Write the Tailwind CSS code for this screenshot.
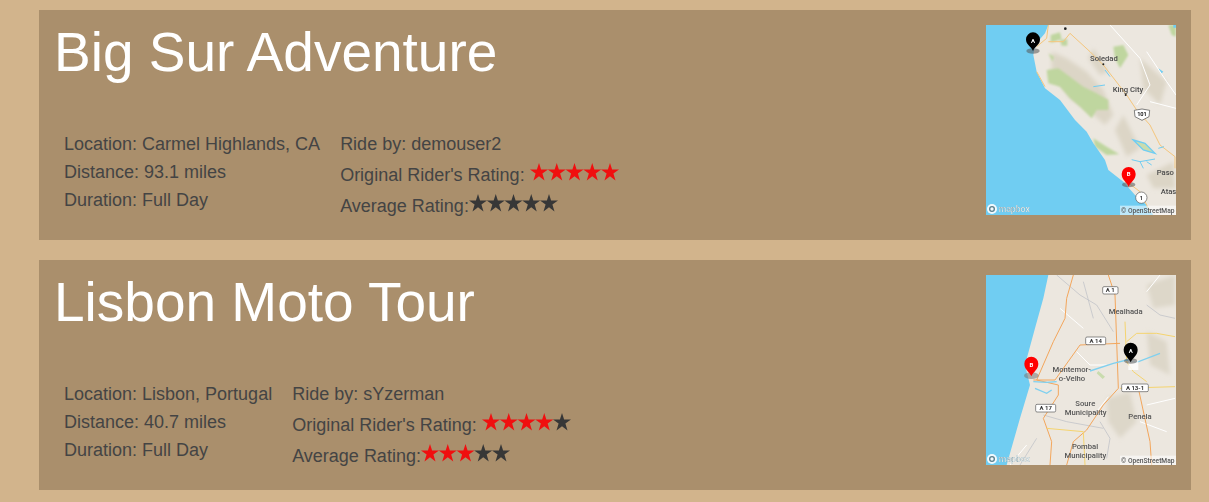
<!DOCTYPE html>
<html lang="en">
<head>
<meta charset="UTF-8" />
<title>Rides</title>
<script src="https://cdn.jsdelivr.net/npm/@tailwindcss/browser@4"></script>
</head>
<body class="bg-[#d2b48c] h-[502px] overflow-hidden font-['Liberation_Sans',sans-serif]">
<svg class="absolute w-0 h-0"><defs><polygon id="star" points="9,0 11.1,6.5 18,6.5 12.4,10.6 14.5,17.4 9,13.2 3.5,17.4 5.6,10.6 0,6.5 6.9,6.5" /><filter id="soft" x="-20%" y="-20%" width="140%" height="140%"><feGaussianBlur stdDeviation="7" /></filter><filter id="soft2" x="-20%" y="-20%" width="140%" height="140%"><feGaussianBlur stdDeviation="3" /></filter></defs></svg>
<div class="flex flex-col gap-5 pt-2.5 pl-[39px] pr-[18px]">

  <!-- Big Sur -->
  <div class="bg-[#aa8f6c] h-[230px] flex justify-between p-[15px]">
    <div>
      <h1 class="text-[55px] leading-[56px] text-white -mt-[1px] h-[106px]">Big Sur Adventure</h1>
      <div class="flex gap-5 pl-2.5 text-[18px] text-[#444444]">
        <div class="flex flex-col">
          <p class="h-7 leading-7">Location: Carmel Highlands, CA</p>
          <p class="h-7 leading-7">Distance: 93.1 miles</p>
          <p class="h-7 leading-7">Duration: Full Day</p>
        </div>
        <div class="flex flex-col">
          <p class="h-7 leading-7">Ride by: demouser2</p>
          <p class="h-[31px] leading-[35px]">Original Rider's Rating: <svg class="inline align-baseline w-[89px] h-[18px]" viewBox="0 0 89 18" fill="#f00f0f"><use href="#star" /><use href="#star" x="17.75" /><use href="#star" x="35.5" /><use href="#star" x="53.25" /><use href="#star" x="71" /></svg></p>
          <p class="h-7 leading-[35px]">Average Rating:<svg class="inline align-baseline w-[89px] h-[18px]" viewBox="0 0 89 18" fill="#373737"><use href="#star" /><use href="#star" x="17.75" /><use href="#star" x="35.5" /><use href="#star" x="53.25" /><use href="#star" x="71" /></svg></p>
        </div>
      </div>
    </div>
    <div class="w-[190px] h-[190px] shrink-0 overflow-hidden bg-[#ece7df]">
    <svg class="w-[190px] h-[190px] blur-[0.5px]" viewBox="18 30 570 570" font-family="Roboto, sans-serif" font-weight="500">
      <rect x="18" y="30" width="570" height="570" fill="#ece7df" />
      <g filter="url(#soft)">
        <path d="M215 110 L260 130 L320 170 L370 225 L400 300 L375 330 L330 290 L270 250 L215 170Z M340 100 L385 170 L360 180 L325 130Z M430 300 L480 400 L440 425 L405 345Z M480 130 L560 200 L540 270 L490 220Z M500 480 L580 440 L585 520 L520 520Z" fill="#dcd5c6" />
      </g>
      <g filter="url(#soft2)">
        <path d="M200 165 L235 160 L270 185 L310 215 L350 235 L385 255 L385 285 L350 285 L335 310 L300 275 L270 250 L240 215 L205 205Z M340 370 L380 395 L418 418 L380 420 L345 395Z M212 60 L240 52 L245 72 L212 84Z M240 75 L262 72 L262 92 L245 92Z M400 95 L430 90 L445 120 L420 160 L405 130Z M565 30 L588 30 L588 65 L575 60Z M205 115 L222 125 L218 140Z" fill="#bfd69f" />
      </g>
      <path d="M205 30 L195 55 L165 90 L160 120 L170 170 L195 220 L240 255 L285 315 L320 350 L340 385 L375 435 L385 465 L430 500 L465 540 L500 570 L520 600 L18 600 L18 30Z" fill="#70cdf2" />
      <path d="M390 30 L480 130 L510 210 L470 270 M500 110 L560 200 L588 240 M510 260 L588 280" fill="none" stroke="#fff" stroke-width="3" />
      <path d="M205 30 L200 70 L170 95 M170 170 L195 215 M205 80 L250 80 L270 55 L330 110 L370 150 L440 240 L470 285 L510 330 L540 390 L585 425 L585 460 M440 500 L480 530 L510 590" fill="none" stroke="#f5c67c" stroke-width="3" />
      <path d="M460 375 L495 385 L525 415 L490 405Z" fill="#c9dcae" stroke="#70cdf2" stroke-width="4" />
      <path d="M455 434 L480 440 L525 432 M480 440 L490 460 M500 440 L515 450 M535 400 L552 395 M340 215 L375 210 M375 165 L390 185" fill="none" stroke="#70cdf2" stroke-width="3" />
      <path d="M535 160 L550 170 L545 175Z M580 30 h8 v8 h-8Z" fill="#70cdf2" />
      <g fill="#4a4a4a" font-size="23">
        <text x="330" y="137">Soledad</text>
        <text x="398" y="230">King City</text>
        <text x="530" y="479">Paso R</text>
        <text x="542" y="537">Atasc</text>
      </g>
      <circle cx="256" cy="41" r="4" fill="#222" /><circle cx="370" cy="148" r="3" fill="#222" /><circle cx="437" cy="240" r="3" fill="#222" />
      <path d="M463 286 L486 282 L509 286 L507 305 L486 316 L465 305Z" fill="#fff" stroke="#444" stroke-width="2" />
      <text x="486" y="304" text-anchor="middle" font-size="17" font-weight="700" fill="#222">101</text>
      <circle cx="484" cy="548" r="17" fill="#fff" stroke="#555" stroke-width="2" />
      <text x="484" y="554" text-anchor="middle" font-size="17" font-weight="700" fill="#333">1</text>
      <ellipse cx="159" cy="108" rx="20" ry="8" fill="#555" opacity=".55" />
      <path d="M159 108 C152 92 138 90 138 73 A21 21 0 0 1 180 73 C180 90 166 92 159 108Z" fill="#000" />
      <text x="159" y="83" text-anchor="middle" font-size="18" font-weight="700" fill="#fff">A</text>
      <ellipse cx="446" cy="509" rx="20" ry="8" fill="#555" opacity=".55" />
      <path d="M446 515 C439 499 425 495 425 477 A21 21 0 0 1 467 477 C467 495 453 499 446 515Z" fill="#f00" />
      <text x="446" y="483" text-anchor="middle" font-size="18" font-weight="700" fill="#fff">B</text>
      <circle cx="36" cy="582" r="15" fill="#fff" opacity=".9" /><circle cx="36" cy="582" r="7" fill="none" stroke="#5a7f8c" stroke-width="4" />
      <text x="56" y="590" font-size="26" font-weight="500" fill="#eef5f7" stroke="#6b8a94" stroke-width=".6">mapbox</text>
      <rect x="420" y="572" width="168" height="28" fill="#fff" opacity=".55" />
      <text x="423" y="593" font-size="20" fill="#555">© OpenStreetMap</text>
    </svg>
    </div>
  </div>

  <!-- Lisbon -->
  <div class="bg-[#aa8f6c] h-[230px] flex justify-between p-[15px]">
    <div>
      <h1 class="text-[55px] leading-[56px] text-white -mt-[1px] h-[106px]">Lisbon Moto Tour</h1>
      <div class="flex gap-5 pl-2.5 text-[18px] text-[#444444]">
        <div class="flex flex-col">
          <p class="h-7 leading-7">Location: Lisbon, Portugal</p>
          <p class="h-7 leading-7">Distance: 40.7 miles</p>
          <p class="h-7 leading-7">Duration: Full Day</p>
        </div>
        <div class="flex flex-col">
          <p class="h-7 leading-7">Ride by: sYzerman</p>
          <p class="h-[31px] leading-[35px]">Original Rider's Rating: <svg class="inline align-baseline w-[89px] h-[18px]" viewBox="0 0 89 18" fill="#f00f0f"><use href="#star" /><use href="#star" x="17.75" /><use href="#star" x="35.5" /><use href="#star" x="53.25" /><use href="#star" x="71" fill="#373737" /></svg></p>
          <p class="h-7 leading-[35px]">Average Rating:<svg class="inline align-baseline w-[89px] h-[18px]" viewBox="0 0 89 18" fill="#f00f0f"><use href="#star" /><use href="#star" x="17.75" /><use href="#star" x="35.5" /><use href="#star" x="53.25" fill="#373737" /><use href="#star" x="71" fill="#373737" /></svg></p>
        </div>
      </div>
    </div>
    <div class="w-[190px] h-[190px] shrink-0 overflow-hidden bg-[#ece7df]">
    <svg class="w-[190px] h-[190px] blur-[0.5px]" viewBox="18 30 570 570" font-family="Roboto, sans-serif" font-weight="500">
      <rect x="18" y="30" width="570" height="570" fill="#ece7df" />
      <g filter="url(#soft)">
        <path d="M380 400 L450 380 L470 470 L420 520 L385 470Z M500 60 L585 30 L585 120 L520 130Z M500 200 L560 230 L570 330 L510 300Z" fill="#ddd7c9" />
      </g>
      <path d="M205 30 L190 100 L165 190 L135 300 L150 360 L120 460 L80 600 L18 600 L18 30Z" fill="#70cdf2" />
      <path d="M230 30 L300 90 L350 120 L400 200 M310 50 L340 160 M500 120 L540 150 L585 160 M360 470 L390 520 L380 580 M190 450 L260 470 L370 490 M120 600 L170 520" fill="none" stroke="#b9bcc4" stroke-width="2" />
      <path d="M240 130 L310 190 M90 600 L140 540 M290 260 L330 300 L380 300 M480 470 L560 500 M350 440 L385 395 M540 30 L500 80 M500 420 L585 400" fill="none" stroke="#fff" stroke-width="3" />
      <path d="M280 30 L260 100 L255 160 L220 230 L170 345 L235 360 L235 390 L190 460 L215 530 L210 600 M385 30 L405 90 L410 230 L415 370 L370 420 L320 495 L280 530 L260 600 M160 345 L225 345 L300 240 L420 235 M475 370 L510 530 L515 600" fill="none" stroke="#f3a65c" stroke-width="3" />
      <path d="M440 230 L470 205 L530 205 L585 215 M435 170 L440 290 L460 320 M420 370 L585 365 M200 490 L310 500 L315 600 M460 320 L500 350" fill="none" stroke="#f5d46f" stroke-width="3" />
      <path d="M160 350 L200 352 L230 350 M165 370 L200 385 L215 375 M330 318 L400 295 L440 285 L470 292 L540 265" fill="none" stroke="#7fd0ef" stroke-width="4" />
      <path d="M355 318 L375 335 L368 342 L350 325Z" fill="#c9dcae" />
      <path d="M445 285 h30 v30 h-30Z" fill="#fff" opacity=".8" />
      <g fill="#555" font-size="23" text-anchor="middle">
        <text x="437" y="146">Mealhada</text>
        <text x="275" y="320">Montemor-</text>
        <text x="276" y="347">o-Velho</text>
        <text x="316" y="422">Soure</text>
        <text x="317" y="449">Municipality</text>
        <text x="480" y="463">Penela</text>
        <text x="315" y="551">Pombal</text>
        <text x="316" y="578">Municipality</text>
      </g>
      <g font-size="18" font-weight="700" fill="#333" text-anchor="middle">
        <rect x="368" y="65" width="46" height="22" rx="4" fill="#fff" stroke="#555" stroke-width="2" /><text x="391" y="82">A 1</text>
        <rect x="317" y="216" width="60" height="23" rx="4" fill="#fff" stroke="#555" stroke-width="2" /><text x="347" y="233">A 14</text>
        <rect x="425" y="357" width="80" height="23" rx="4" fill="#fff" stroke="#555" stroke-width="2" /><text x="465" y="374">A 13-1</text>
        <rect x="167" y="418" width="60" height="23" rx="4" fill="#fff" stroke="#555" stroke-width="2" /><text x="197" y="435">A 17</text>
      </g>
      <ellipse cx="452" cy="288" rx="20" ry="8" fill="#555" opacity=".55" />
      <path d="M452 292 C445 276 431 272 431 254 A21 21 0 0 1 473 254 C473 272 459 276 452 292Z" fill="#000" />
      <text x="452" y="263" text-anchor="middle" font-size="18" font-weight="700" fill="#fff">A</text>
      <ellipse cx="154" cy="332" rx="22" ry="10" fill="#777" opacity=".55" />
      <path d="M154 334 C147 318 133 314 133 296 A21 21 0 0 1 175 296 C175 314 161 318 154 334Z" fill="#f00" />
      <text x="154" y="305" text-anchor="middle" font-size="18" font-weight="700" fill="#fff">B</text>
      <circle cx="36" cy="582" r="15" fill="#fff" opacity=".9" /><circle cx="36" cy="582" r="7" fill="none" stroke="#5a7f8c" stroke-width="4" />
      <text x="56" y="590" font-size="26" font-weight="500" fill="#eef5f7" stroke="#6b8a94" stroke-width=".6">mapbox</text>
      <rect x="420" y="572" width="168" height="28" fill="#fff" opacity=".55" />
      <text x="423" y="593" font-size="20" fill="#555">© OpenStreetMap</text>
    </svg>
    </div>
  </div>

</div>
</body>
</html>
